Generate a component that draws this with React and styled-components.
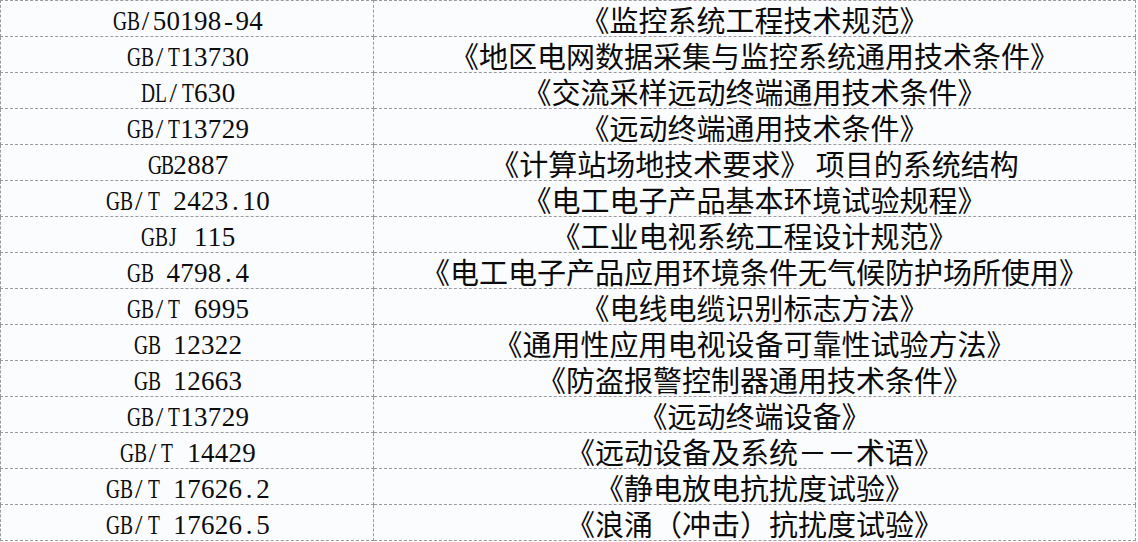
import React from 'react'
import styled, { createGlobalStyle } from 'styled-components'

const GlobalStyle = createGlobalStyle`
  html, body {
    margin: 0;
    padding: 0;
    background: #fbfcfe;
  }
`

const rows = [
  ['GB/50198-94', '《监控系统工程技术规范》'],
  ['GB/T13730', '《地区电网数据采集与监控系统通用技术条件》'],
  ['DL/T630', '《交流采样远动终端通用技术条件》'],
  ['GB/T13729', '《远动终端通用技术条件》'],
  ['GB2887', '《计算站场地技术要求》 项目的系统结构'],
  ['GB/T 2423.10', '《电工电子产品基本环境试验规程》'],
  ['GBJ 115', '《工业电视系统工程设计规范》'],
  ['GB 4798.4', '《电工电子产品应用环境条件无气候防护场所使用》'],
  ['GB/T 6995', '《电线电缆识别标志方法》'],
  ['GB 12322', '《通用性应用电视设备可靠性试验方法》'],
  ['GB 12663', '《防盗报警控制器通用技术条件》'],
  ['GB/T13729', '《远动终端设备》'],
  ['GB/T 14429', '《远动设备及系统－－术语》'],
  ['GB/T 17626.2', '《静电放电抗扰度试验》'],
  ['GB/T 17626.5', '《浪涌（冲击）抗扰度试验》'],
]

const Table = styled.table`
  width: 1136px;
  border-collapse: collapse;
  table-layout: fixed;
  color: #0c0c0c;
`

const Row = styled.tr`
  height: 36px;
`

const CodeCell = styled.td`
  width: 372px;
  padding: 4px 0 0;
  border: 1px dashed #9c9aa0;
  text-align: center;
  font-family: "Liberation Serif", "DejaVu Serif", serif;
  font-size: 27px;
  line-height: 30px;
  white-space: nowrap;
`

// half-width cell so the serif code text lays out like a monospace face
const Glyph = styled.span`
  display: inline-block;
  width: 13.8px;
  text-align: center;
  transform: ${(p) => (p.$narrow ? 'scaleX(0.72)' : 'none')};
`

const TitleCell = styled.td`
  padding: 0;
  border: 1px dashed #9c9aa0;
  text-align: center;
  font-family: "Noto Sans CJK SC", "Noto Sans", sans-serif;
  font-size: 29px;
  line-height: 34px;
  white-space: pre;
`

function Code({ text }) {
  return (
    <>
      {text.split('').map((ch, i) => (
        <Glyph key={i} $narrow={/[A-Z]/.test(ch)}>
          {ch === ' ' ? '\u00a0' : ch}
        </Glyph>
      ))}
    </>
  )
}

export default function App() {
  return (
    <>
      <GlobalStyle />
      <Table>
        <tbody>
          {rows.map(([code, title], i) => (
            <Row key={i}>
              <CodeCell><Code text={code} /></CodeCell>
              <TitleCell>{title}</TitleCell>
            </Row>
          ))}
        </tbody>
      </Table>
    </>
  )
}
